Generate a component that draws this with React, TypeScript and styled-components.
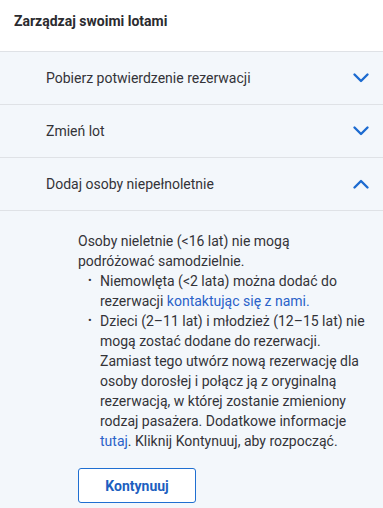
import React, { useState } from 'react';
import styled, { createGlobalStyle } from 'styled-components';

const GlobalStyle = createGlobalStyle`
  html, body {
    margin: 0;
    padding: 0;
    background: #ffffff;
  }
  body {
    font-family: Roboto, "Noto Sans", sans-serif;
    color: #2e2e33;
  }
`;

const Panel = styled.div`
  width: 383px;
  min-height: 508px;
  display: flex;
  flex-direction: column;
  background: #f3f7fb;
`;

const Header = styled.h2`
  margin: 0;
  height: 52px;
  display: flex;
  align-items: center;
  padding: 0 14px 10px;
  box-sizing: border-box;
  background: #ffffff;
  font-size: 14px;
  font-weight: 700;
  color: #2b2b2f;
  border-bottom: 1px solid #dfe2e6;
`;

const Item = styled.div`
  border-bottom: 1px solid #dfe2e6;
`;

const Trigger = styled.button`
  width: 100%;
  height: 52px;
  display: flex;
  align-items: center;
  justify-content: space-between;
  padding: 0 13px 0 46px;
  border: none;
  background: transparent;
  font-family: inherit;
  font-size: 14px;
  color: #333338;
  cursor: pointer;
  text-align: left;
`;

const Chevron = styled.svg<{ $open: boolean }>`
  width: 18px;
  height: 18px;
  transform: ${(p) => (p.$open ? 'rotate(180deg)' : 'none')};
`;

const Body = styled.div`
  padding: 20px 16px 8px 78px;
  font-size: 14px;
  line-height: 20px;
  color: #333338;
`;

const Paragraph = styled.p`
  margin: 0;
`;

const List = styled.ul`
  margin: 0;
  padding-left: 22px;
  list-style: none;
`;

const ListItem = styled.li`
  position: relative;
  &::before {
    content: '•';
    position: absolute;
    left: -12px;
    font-size: 11px;
    color: #333338;
  }
`;

const Link = styled.a`
  color: #2a62c9;
  text-decoration: none;
`;

const Button = styled.button`
  margin-top: 17px;
  width: 118px;
  height: 35px;
  border: 1px solid #1f6fd1;
  border-radius: 3px;
  background: #ffffff;
  color: #1d5fc0;
  font-family: inherit;
  font-size: 14px;
  font-weight: 700;
  cursor: pointer;
`;

const ChevronIcon = ({ open }: { open: boolean }) => (
  <Chevron $open={open} viewBox="0 0 18 18" fill="none">
    <path d="M2.5 5.5 L9 12 L15.5 5.5" stroke="#1c6bd0" strokeWidth="2.4" strokeLinecap="round" strokeLinejoin="round" />
  </Chevron>
);

const items = ['Pobierz potwierdzenie rezerwacji', 'Zmień lot', 'Dodaj osoby niepełnoletnie'];

export default function App() {
  const [open, setOpen] = useState(2);
  return (
    <>
      <GlobalStyle />
      <Panel>
        <Header>Zarządzaj swoimi lotami</Header>
        {items.map((label, i) => (
          <Item key={label}>
            <Trigger onClick={() => setOpen(open === i ? -1 : i)}>
              {label}
              <ChevronIcon open={open === i} />
            </Trigger>
          </Item>
        ))}
        {open === 2 && (
          <Body>
            <Paragraph>Osoby nieletnie (&lt;16 lat) nie mogą podróżować samodzielnie.</Paragraph>
            <List>
              <ListItem>
                Niemowlęta (&lt;2 lata) można dodać do rezerwacji <Link href="#">kontaktując się z nami.</Link>
              </ListItem>
              <ListItem>
                Dzieci (2–11 lat) i młodzież (12–15 lat) nie mogą zostać dodane do rezerwacji. Zamiast tego utwórz nową
                rezerwację dla osoby dorosłej i połącz ją z oryginalną rezerwacją, w której zostanie zmieniony rodzaj
                pasażera. Dodatkowe informacje <Link href="#">tutaj</Link>. Kliknij Kontynuuj, aby rozpocząć.
              </ListItem>
            </List>
            <Button>Kontynuuj</Button>
          </Body>
        )}
      </Panel>
    </>
  );
}
